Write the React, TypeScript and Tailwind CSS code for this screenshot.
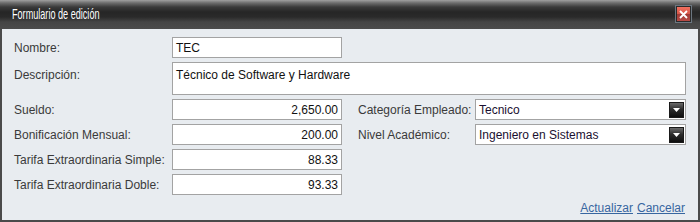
import React from 'react';

const font = "font-['Liberation_Sans',Arial,sans-serif]";

function TextBox({ value, align = 'left', className = '' }: { value: string; align?: 'left' | 'right'; className?: string }) {
    return (
        <div
            className={`h-[21px] bg-white border border-[#a3a3a3] px-[3px] flex items-center text-[12px] text-[#111] ${align === 'right' ? 'justify-end' : ''} ${className}`}
        >
            {value}
        </div>
    );
}

function Select({ value }: { value: string }) {
    return (
        <div className="h-[21px] bg-white border border-[#a3a3a3] pl-[3px] pr-[1px] flex items-center justify-between text-[12px] text-[#1a1030]">
            <span>{value}</span>
            <span className="w-[15px] h-[16px] bg-[linear-gradient(to_bottom,#6a6a6a,#2c2c2c_45%,#0e0e0e)] border border-[#1a1a1a] flex items-center justify-center">
                <svg width="7" height="4" viewBox="0 0 7 4">
                    <path d="M0 0H7L3.5 4Z" fill="#fff" />
                </svg>
            </span>
        </div>
    );
}

export default function App() {
    return (
        <div className={`w-[700px] h-[222px] flex flex-col ${font}`}>
            {/* Title bar */}
            <div className="h-[29px] flex items-center justify-between pl-[12px] pr-[8px] bg-[linear-gradient(to_bottom,#a0a0a0_0px,#6c6c6c_3px,#3a3a3a_7px,#262626_12px,#2a2a2a_17px,#454545_22px,#4b4b4b_29px)]">
                <span className="text-white text-[14px] origin-left scale-x-[0.65] whitespace-nowrap">Formulario de edición</span>
                <div className="w-[17px] h-[18px] border border-[#6b7680] bg-[#2a2a2a] p-[1px] mt-[-1px]">
                    <div className="w-full h-full bg-[linear-gradient(to_bottom,#f3705f,#d65648_50%,#9e3a36_51%,#b84a44)] flex items-center justify-center">
                        <svg width="9" height="9" viewBox="0 0 9 9">
                            <path d="M1 1L8 8M8 1L1 8" stroke="#fff" strokeWidth="1.8" />
                        </svg>
                    </div>
                </div>
            </div>

            {/* Body */}
            <div className="flex-1 bg-[#e8ecf0] border-x-2 border-b-2 border-[#4a4a4a] pl-[12px] pt-[8px] flex flex-col">
                <div className="grid grid-cols-[158px_170px_16px_117px_211px] gap-y-[4px] text-[12px] text-[#3a3a3a]">
                    <div className="flex items-center">Nombre:</div>
                    <TextBox value="TEC" />
                    <div className="col-span-3" />

                    <div className="pt-[4px]">Descripción:</div>
                    <div className="col-span-4 h-[33px] bg-white border border-[#a3a3a3] px-[3px] pt-[3px] text-[12px] text-[#111]">
                        Técnico de Software y Hardware
                    </div>

                    <div className="flex items-center">Sueldo:</div>
                    <TextBox value="2,650.00" align="right" />
                    <div />
                    <div className="flex items-center">Categoría Empleado:</div>
                    <Select value="Tecnico" />

                    <div className="flex items-center">Bonificación Mensual:</div>
                    <TextBox value="200.00" align="right" />
                    <div />
                    <div className="flex items-center">Nivel Académico:</div>
                    <Select value="Ingeniero en Sistemas" />

                    <div className="flex items-center">Tarifa Extraordinaria Simple:</div>
                    <TextBox value="88.33" align="right" />
                    <div className="col-span-3" />

                    <div className="flex items-center">Tarifa Extraordinaria Doble:</div>
                    <TextBox value="93.33" align="right" />
                    <div className="col-span-3" />
                </div>

                <div className="flex justify-end gap-[4px] pr-[13px] mt-[4px] text-[12px] text-[#3766a0]">
                    <a className="underline cursor-pointer">Actualizar</a>
                    <a className="underline cursor-pointer">Cancelar</a>
                </div>
            </div>
        </div>
    );
}
